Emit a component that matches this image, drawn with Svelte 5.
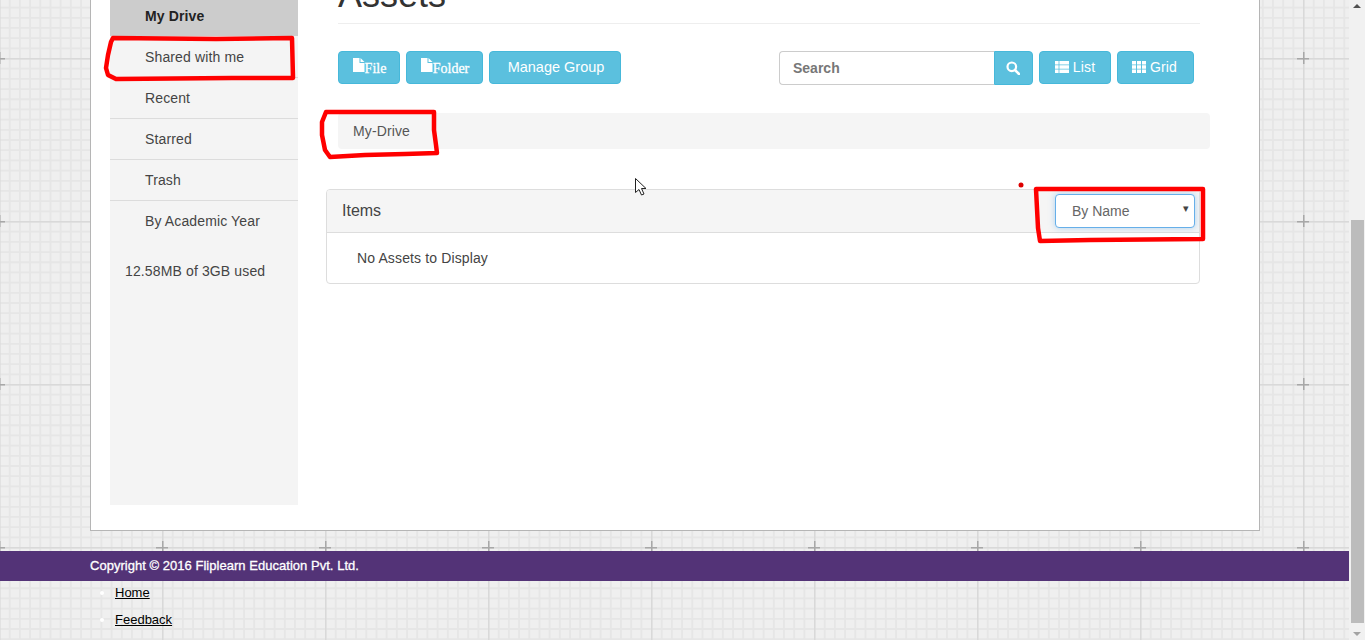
<script>
    const navItems = [
        { label: 'My Drive', active: true },
        { label: 'Shared with me' },
        { label: 'Recent' },
        { label: 'Starred' },
        { label: 'Trash' },
        { label: 'By Academic Year' }
    ];

    // background grid: 16 minor cells in each 163px tile
    const minorLines = Array.from({ length: 16 }, (_, i) => i * 10.19 + 0.5);
</script>

<div class="screen">
    <svg class="grid" width="1349" height="640" aria-hidden="true">
        <defs>
            <pattern id="tile" width="163" height="163" patternUnits="userSpaceOnUse" x="-1" y="58">
                <rect width="163" height="163" fill="#efefef" />
                {#each minorLines as p}
                    <line x1={p} y1="0" x2={p} y2="163" stroke="#e6e6e6" stroke-width="1.8" />
                    <line x1="0" y1={p} x2="163" y2={p} stroke="#e6e6e6" stroke-width="1.8" />
                {/each}
                <line x1="0.5" y1="0" x2="0.5" y2="163" stroke="#d9d9d9" stroke-width="2" />
                <line x1="0" y1="0.5" x2="163" y2="0.5" stroke="#d9d9d9" stroke-width="2" />
                <path d="M0 0.5H6M157 0.5H163M0.5 0V6M0.5 157V163" stroke="#a8a8a8" stroke-width="2" />
            </pattern>
        </defs>
        <rect width="1349" height="640" fill="url(#tile)" />
    </svg>

    <div class="page">
        <div class="wrap">
            <aside class="sidebar">
                <ul class="nav">
                    {#each navItems as item}
                        <li class:active={item.active}>{item.label}</li>
                    {/each}
                </ul>
                <p class="usage">12.58MB of 3GB used</p>
            </aside>

            <main>
                <h1>Assets</h1>

                <div class="toolbar">
                    <button class="btn serif file">
                        <svg width="13" height="14" viewBox="0 0 13 14"><path d="M1 0H7.5V5H12.5V14H1ZM8.5 0L12.5 4H8.5Z" fill="#fff" /></svg><span>File</span>
                    </button>
                    <button class="btn serif folder">
                        <svg width="13" height="14" viewBox="0 0 13 14"><path d="M1 0H7.5V5H12.5V14H1ZM8.5 0L12.5 4H8.5Z" fill="#fff" /></svg><span>Folder</span>
                    </button>
                    <button class="btn manage">Manage Group</button>

                    <div class="search">
                        <input type="text" placeholder="Search" />
                        <button class="search-btn" aria-label="Search">
                            <svg width="14" height="14" viewBox="0 0 14 14">
                                <circle cx="5.8" cy="5.8" r="4.3" fill="none" stroke="#fff" stroke-width="2.2" />
                                <path d="M9 9L13 13" stroke="#fff" stroke-width="2.6" stroke-linecap="round" />
                            </svg>
                        </button>
                    </div>
                    <button class="btn view">
                        <svg width="14" height="12" viewBox="0 0 14 12" fill="#fff">
                            <path d="M0 0H3.6V3.4H0ZM4.4 0H14V3.4H4.4ZM0 4.3H3.6V7.7H0ZM4.4 4.3H14V7.7H4.4ZM0 8.6H3.6V12H0ZM4.4 8.6H14V12H4.4Z" />
                        </svg>
                        List
                    </button>
                    <button class="btn view grid-btn">
                        <svg width="14" height="12" viewBox="0 0 14 12" fill="#fff">
                            <path d="M0 0H4V3.4H0ZM5 0H9V3.4H5ZM10 0H14V3.4H10ZM0 4.3H4V7.7H0ZM5 4.3H9V7.7H5ZM10 4.3H14V7.7H10ZM0 8.6H4V12H0ZM5 8.6H9V12H5ZM10 8.6H14V12H10Z" />
                        </svg>
                        Grid
                    </button>
                </div>

                <div class="breadcrumb">My-Drive</div>

                <section class="panel">
                    <header>
                        <span>Items</span>
                        <div class="select-box">
                            <select>
                                <option>By Name</option>
                                <option>By Date</option>
                            </select>
                            <span class="caret">▾</span>
                        </div>
                    </header>
                    <div class="panel-body">No Assets to Display</div>
                </section>
            </main>
        </div>

        <footer>
            <div class="copyright">Copyright © 2016 Fliplearn Education Pvt. Ltd.</div>
            <ul>
                <li><a href="#home">Home</a></li>
                <li><a href="#feedback">Feedback</a></li>
            </ul>
        </footer>
    </div>

    <div class="scrollbar">
        <span class="arrow up"></span>
        <div class="thumb"></div>
        <span class="arrow down"></span>
    </div>

    <!-- marker scribbles and mouse pointer lying over the screenshot -->
    <svg class="marks" width="1365" height="640" aria-hidden="true">
        <g fill="none" stroke="#f00" stroke-width="4.5" stroke-linejoin="round" stroke-linecap="round">
            <path d="M113 38 L216 39 L292 38 L293 78 L232 78 L116 79 L108 75 L106 68 L108 55 L111 42 Z" />
            <path d="M326 112 L434 112 L434 130 L436 145 L437 153 L405 154 L365 155 L330 157 L325 150 L322 135 L322 122 Z" />
            <path d="M1036 189 L1203 189 L1203 239 L1090 240 L1040 241 L1038 228 Z" />
        </g>
        <circle cx="1021" cy="185" r="2.5" fill="#d00" />
        <path d="M635.5 178.5V192.5L639 189.5L641.5 195L644 194L641.5 188.5H646Z" fill="#fff" stroke="#222" stroke-width="1" />
    </svg>
</div>

<style>
    :global(body) {
        margin: 0;
        overflow: hidden;
    }

    .screen {
        position: relative;
        display: flex;
        width: 1365px;
        height: 640px;
        overflow: hidden;
        font-family: "Liberation Sans", Arial, sans-serif;
        font-size: 14px;
        letter-spacing: 0.13px;
        color: #444;
    }

    .grid {
        position: absolute;
        top: 0;
        left: 0;
    }

    .marks {
        position: absolute;
        top: 0;
        left: 0;
        pointer-events: none;
    }

    .page {
        position: relative;
        width: 1349px;
        flex: none;
    }

    .wrap {
        display: flex;
        box-sizing: border-box;
        width: 1170px;
        height: 571px;
        margin: -40px 0 0 90px;
        padding-left: 19px;
        background: #fff;
        border: 1px solid #b5b5b5;
    }

    .sidebar {
        flex: none;
        width: 188px;
        height: 510px;
        margin-top: 34px;
        background: #f4f4f4;
    }

    .nav {
        margin: 0;
        padding: 0;
        list-style: none;
    }

    .nav li {
        box-sizing: border-box;
        height: 41px;
        padding-left: 35px;
        line-height: 41px;
        border-bottom: 1px solid #dcdcdc;
    }

    .nav li:nth-child(2) {
        height: 42px;
        line-height: 42px;
    }

    .nav li:last-child {
        border-bottom: none;
    }

    .nav li.active {
        padding-top: 1px;
        line-height: 40px;
        background: #ccc;
        border-bottom: none;
        font-weight: bold;
        color: #222;
    }

    .usage {
        margin: 19px 0 0 15px;
        line-height: 20px;
    }

    main {
        flex: none;
        width: 884px;
        margin-left: 28px;
    }

    h1 {
        margin: 14px 10px 0 12px;
        padding-bottom: 8px;
        font-size: 36px;
        font-weight: 400;
        line-height: 40px;
        letter-spacing: 0;
        color: #333;
        border-bottom: 1px solid #eee;
    }

    .toolbar {
        display: flex;
        align-items: flex-start;
        gap: 6px;
        margin: 27px 16px 0 12px;
    }

    .btn {
        display: flex;
        align-items: center;
        justify-content: center;
        box-sizing: border-box;
        height: 33px;
        padding: 0;
        color: #fff;
        font-family: inherit;
        font-size: 14px;
        letter-spacing: inherit;
        background: #5bc0de;
        border: 1px solid #46b8da;
        border-radius: 4px;
    }

    .serif {
        font-family: "Liberation Serif", serif;
        letter-spacing: 0;
        -webkit-text-stroke: 0.3px #fff;
    }

    .serif svg {
        margin-top: -5px;
    }

    .serif span {
        margin-top: 3px;
    }

    .file {
        width: 62px;
    }

    .folder {
        width: 77px;
    }

    .manage {
        width: 132px;
        padding: 0 0 2px 2px;
        font-size: 14.5px;
        letter-spacing: 0;
    }

    .search {
        display: flex;
        margin-left: auto;
    }

    .search input {
        box-sizing: border-box;
        width: 215px;
        height: 34px;
        padding: 0 13px;
        font-family: inherit;
        font-size: 14px;
        font-weight: bold;
        letter-spacing: 0;
        background: #fff;
        border: 1px solid #ccc;
        border-right: none;
        border-radius: 4px 0 0 4px;
        outline: none;
    }

    .search input::placeholder {
        color: #777;
        opacity: 1;
    }

    .search-btn {
        display: flex;
        align-items: center;
        justify-content: center;
        box-sizing: border-box;
        width: 39px;
        height: 34px;
        padding: 0 2px 0 0;
        background: #5bc0de;
        border: 1px solid #46b8da;
        border-radius: 0 4px 4px 0;
    }

    .view {
        gap: 4px;
        width: 72px;
        padding-bottom: 2px;
    }

    .grid-btn {
        width: 77px;
        padding-right: 2px;
    }

    .breadcrumb {
        box-sizing: border-box;
        height: 36px;
        margin: 28px 0 0 12px;
        padding-left: 15px;
        line-height: 36px;
        color: #555;
        background: #f5f5f5;
        border-radius: 4px;
    }

    .panel {
        box-sizing: border-box;
        width: 874px;
        height: 95px;
        margin-top: 40px;
        background: #fff;
        border: 1px solid #ddd;
        border-radius: 4px;
    }

    .panel header {
        display: flex;
        align-items: center;
        justify-content: space-between;
        box-sizing: border-box;
        height: 43px;
        padding: 0 4px 0 15px;
        font-size: 16px;
        letter-spacing: 0;
        background: #f5f5f5;
        border-bottom: 1px solid #ddd;
        border-radius: 3px 3px 0 0;
    }

    .select-box {
        position: relative;
    }

    select {
        display: block;
        box-sizing: border-box;
        width: 140px;
        height: 34px;
        padding: 0 16px;
        font-family: inherit;
        font-size: 14px;
        color: #666;
        background: #fff;
        border: 1px solid #66afe9;
        border-radius: 4px;
        box-shadow: 0 0 6px rgba(102, 175, 233, 0.5);
        outline: none;
        appearance: none;
    }

    .caret {
        position: absolute;
        top: 8px;
        right: 6px;
        font-size: 11px;
        color: #444;
    }

    .panel-body {
        padding: 15px 30px;
        line-height: 20px;
    }

    footer {
        margin-top: 20px;
    }

    .copyright {
        height: 30px;
        padding-left: 90px;
        line-height: 29px;
        font-size: 13px;
        letter-spacing: 0.03px;
        -webkit-text-stroke: 0.3px #fff;
        color: #fff;
        background: #533377;
    }

    footer ul {
        margin: 0;
        padding: 2px 0 0 115px;
        font-size: 13px;
        letter-spacing: 0;
    }

    footer li {
        padding-bottom: 7px;
        line-height: 20px;
    }

    footer li::marker {
        color: #fff;
    }

    footer a {
        color: #000;
    }

    .scrollbar {
        position: relative;
        display: flex;
        flex-direction: column;
        align-items: center;
        flex: none;
        width: 16px;
        height: 640px;
        background: #f1f1f1;
    }

    .thumb {
        position: absolute;
        top: 220px;
        left: 2px;
        width: 13px;
        height: 403px;
        background: #bcbcbc;
    }

    .arrow {
        position: absolute;
        left: 4px;
        width: 0;
        height: 0;
        border-left: 4px solid transparent;
        border-right: 4px solid transparent;
    }

    .arrow.up {
        top: 4px;
        border-bottom: 4px solid #505050;
    }

    .arrow.down {
        bottom: 4px;
        border-top: 4px solid #a3a3a3;
    }
</style>
